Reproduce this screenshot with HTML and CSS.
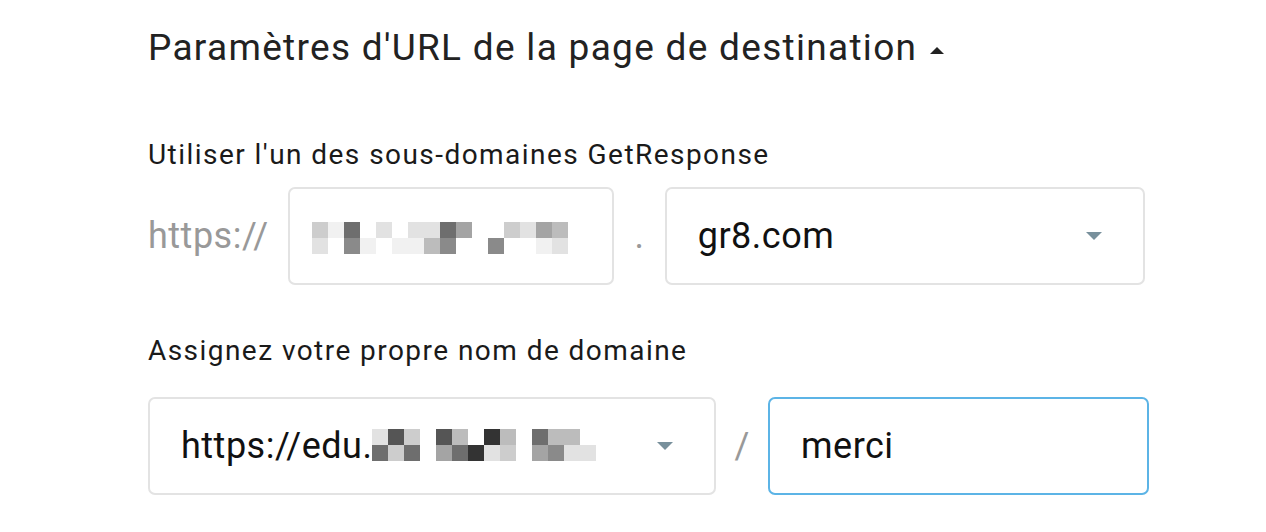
FILE: index.html
```html
<!DOCTYPE html>
<html lang="fr">
<head>
    <meta charset="UTF-8">
    <meta name="viewport" content="width=device-width, initial-scale=1.0">
    <title>Paramètres d'URL</title>
    <link rel="stylesheet" href="styles.css">
</head>
<body>
    <div class="container">
        <h2 class="title">
            Paramètres d'URL de la page de destination
            <svg class="caret" width="16" height="8" viewBox="0 0 16 8"><path d="M1 8 L8 1 L15 8 Z" fill="#222"/></svg>
        </h2>

        <div class="group">
            <label class="label">Utiliser l'un des sous-domaines GetResponse</label>
            <div class="row">
                <span class="prefix">https://</span>
                <div class="field field-sub">
                    <div class="blur blur-16">
                        <span class="g3"></span><span class="g1"></span><span class="g7"></span><span class="g0"></span><span class="g2"></span><span class="g0"></span><span class="g2"></span><span class="g2"></span><span class="g7"></span><span class="g5"></span><span class="g0"></span><span class="g0"></span><span class="g3"></span><span class="g2"></span><span class="g5"></span><span class="g4"></span>
                        <span class="g2"></span><span class="g0"></span><span class="g6"></span><span class="g1"></span><span class="g0"></span><span class="g1"></span><span class="g1"></span><span class="g4"></span><span class="g6"></span><span class="g0"></span><span class="g0"></span><span class="g6"></span><span class="g0"></span><span class="g0"></span><span class="g1"></span><span class="g2"></span>
                    </div>
                </div>
                <span class="sep sep-dot">.</span>
                <div class="field field-select field-tld">
                    <span class="value">gr8.com</span>
                    <svg class="arrow" width="16" height="8" viewBox="0 0 16 8"><path d="M0 0 L16 0 L8 8 Z" fill="#78909c"/></svg>
                </div>
            </div>
        </div>

        <div class="group group-own">
            <label class="label">Assignez votre propre nom de domaine</label>
            <div class="row">
                <div class="field field-select field-domain">
                    <span class="value">https://edu.</span>
                    <div class="blur blur-14">
                        <span class="g2"></span><span class="g8"></span><span class="g3"></span><span class="g0"></span><span class="g8"></span><span class="g4"></span><span class="g0"></span><span class="g9"></span><span class="g4"></span><span class="g0"></span><span class="g7"></span><span class="g4"></span><span class="g4"></span><span class="g0"></span>
                        <span class="g7"></span><span class="g3"></span><span class="g7"></span><span class="g0"></span><span class="g5"></span><span class="g7"></span><span class="g9"></span><span class="g2"></span><span class="g3"></span><span class="g0"></span><span class="g5"></span><span class="g6"></span><span class="g2"></span><span class="g2"></span>
                    </div>
                    <svg class="arrow" width="16" height="8" viewBox="0 0 16 8"><path d="M0 0 L16 0 L8 8 Z" fill="#78909c"/></svg>
                </div>
                <span class="sep sep-slash">/</span>
                <div class="field field-input">
                    <span class="value">merci</span>
                </div>
            </div>
        </div>
    </div>
</body>
</html>
```

FILE: styles.css
```css
body {
    margin: 0;
    background-color: #fff;
    font-family: Roboto, "Noto Sans", sans-serif;
    color: #111;
}

.container {
    padding: 26px 0 0 148px;
}

.title {
    margin: 0;
    font-size: 37px;
    font-weight: 400;
    line-height: 44px;
    letter-spacing: 1.3px;
    color: #222;
    display: flex;
    align-items: center;
    gap: 12px;
}

.caret {
    margin-top: 4px;
}

.group {
    margin-top: 69px;
}

.group-own {
    margin-top: 50px;
}

.label {
    display: block;
    font-size: 28px;
    line-height: 32px;
    letter-spacing: 1.45px;
    color: #1a1a1a;
    margin-bottom: 16px;
}

.group-own .label {
    margin-bottom: 30px;
}

.row {
    display: flex;
    align-items: center;
}

.prefix {
    font-size: 36px;
    letter-spacing: 0.5px;
    color: #999;
    margin-right: 19px;
}

.field {
    box-sizing: border-box;
    height: 98px;
    border: 2px solid #e3e3e3;
    border-radius: 7px;
    display: flex;
    align-items: center;
    padding: 0 41px 0 31px;
    background-color: #fff;
}

.value {
    font-size: 36px;
    letter-spacing: 0.5px;
    color: #111;
}

.field-sub {
    width: 326px;
    padding-left: 22px;
}

.field-tld {
    width: 480px;
}

.field-domain {
    width: 568px;
}

.field-input {
    width: 381px;
    border-color: #5cb4e6;
}

.arrow {
    margin-left: auto;
}

.sep {
    font-size: 36px;
    color: #999;
    text-align: center;
}

.sep-dot {
    width: 51px;
}

.sep-slash {
    width: 52px;
}

.blur {
    display: grid;
    grid-template-rows: 16px 16px;
    margin-top: 4px;
}

.blur-16 {
    grid-template-columns: repeat(16, 16px);
}

.blur-14 {
    grid-template-columns: repeat(14, 16px);
    margin-top: -2px;
}

.g0 { background-color: #fff; }
.g1 { background-color: #f1f1f1; }
.g2 { background-color: #e2e2e2; }
.g3 { background-color: #cdcdcd; }
.g4 { background-color: #bcbcbc; }
.g5 { background-color: #a4a4a4; }
.g6 { background-color: #8a8a8a; }
.g7 { background-color: #6e6e6e; }
.g8 { background-color: #555; }
.g9 { background-color: #333; }
```
